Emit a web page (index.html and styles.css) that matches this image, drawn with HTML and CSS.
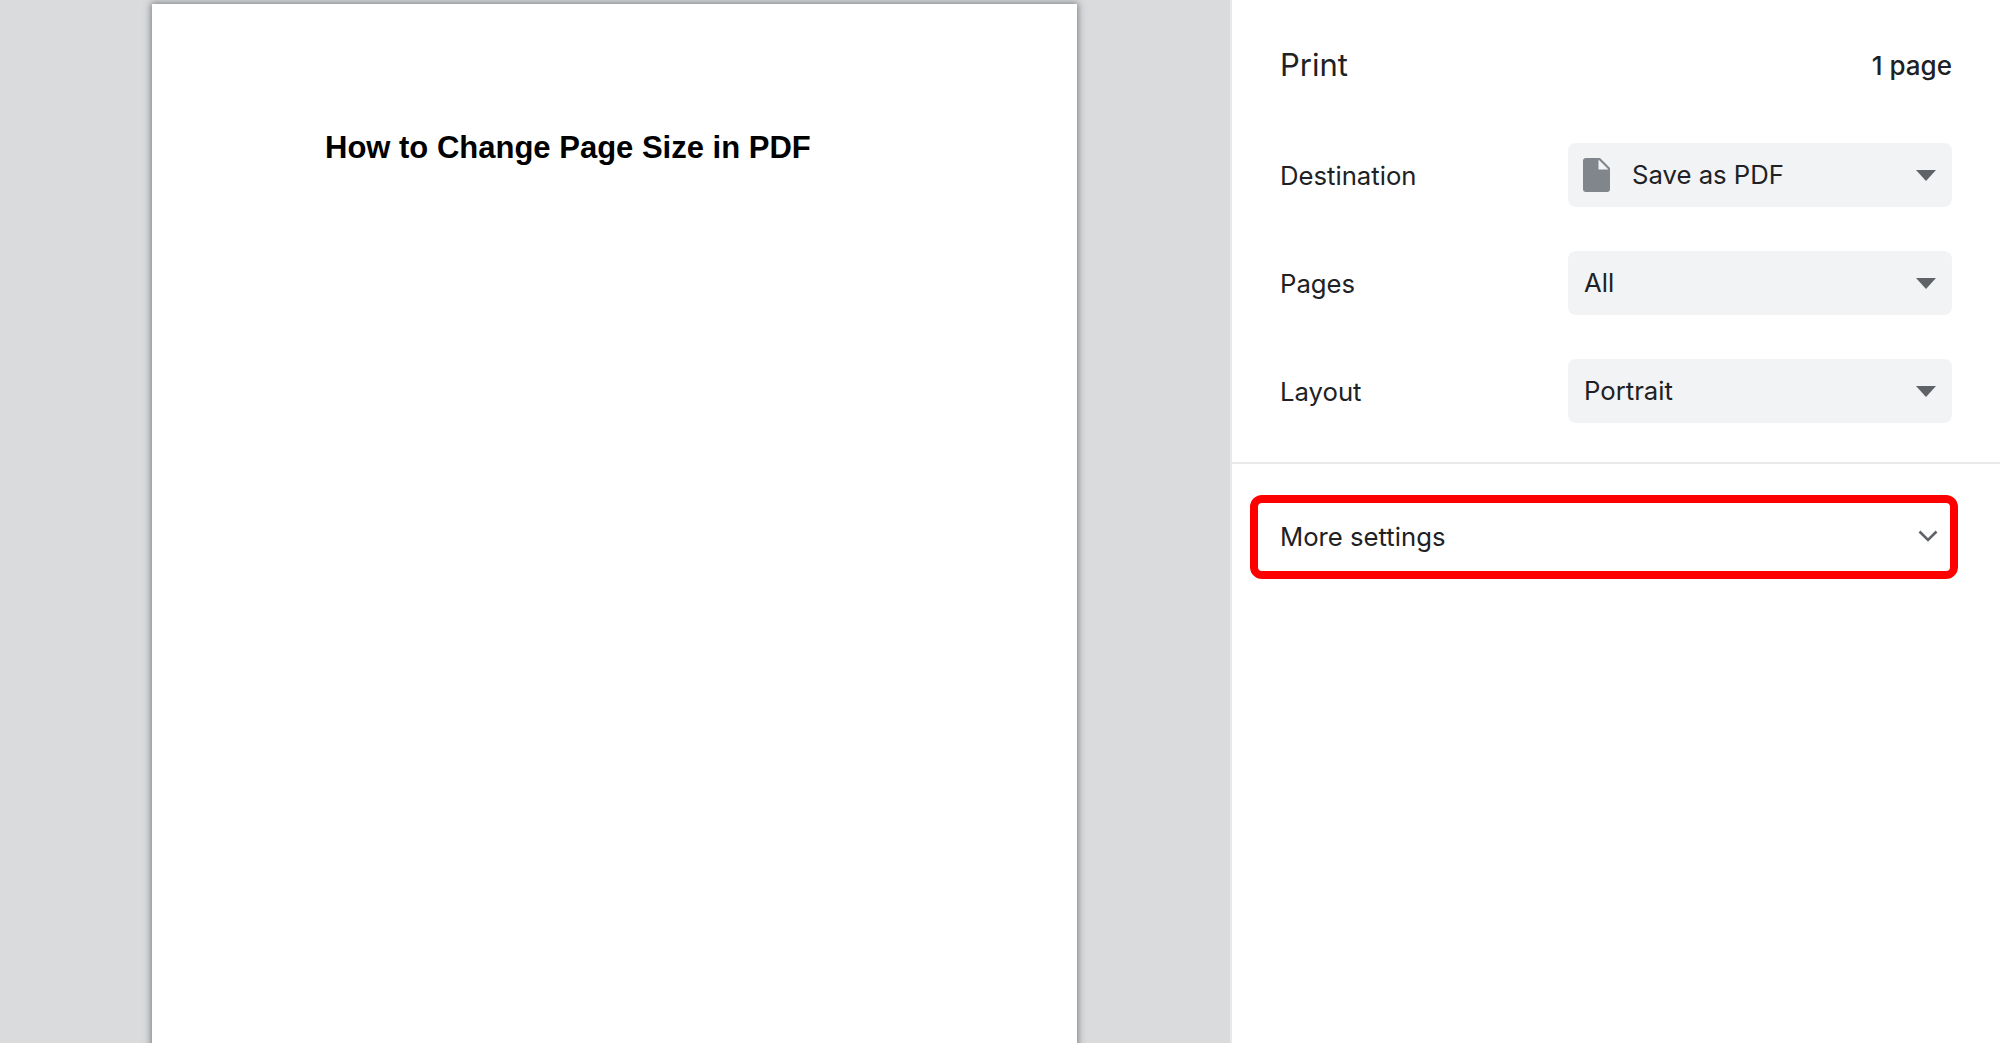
FILE: index.html
```html
<!DOCTYPE html>
<html lang="en">
<head>
<meta charset="utf-8">
<title>Print</title>
<link rel="stylesheet" href="styles.css">
</head>
<body>
<main class="preview">
  <article class="sheet">
    <h1 class="sheet-title">How to Change Page Size in PDF</h1>
  </article>
</main>
<aside class="sidebar">
  <header class="head">
    <h2 class="head-title">Print</h2>
    <span class="head-count">1 page</span>
  </header>
  <section class="settings">
    <div class="row">
      <span class="label">Destination</span>
      <div class="select">
        <svg class="doc-icon" viewBox="0 0 27 34" aria-hidden="true"><path d="M3 0H17L27 10V31a3 3 0 0 1-3 3H3a3 3 0 0 1-3-3V3a3 3 0 0 1 3-3Z" fill="#80868b"/><path d="M15.500 1.500V11.500H25.500Z" fill="#f1f3f4"/></svg>
        <span class="value">Save as PDF</span>
        <svg class="caret" viewBox="0 0 20 11" aria-hidden="true"><path d="M0 0H20L10 11Z"/></svg>
      </div>
    </div>
    <div class="row">
      <span class="label">Pages</span>
      <div class="select">
        <span class="value">All</span>
        <svg class="caret" viewBox="0 0 20 11" aria-hidden="true"><path d="M0 0H20L10 11Z"/></svg>
      </div>
    </div>
    <div class="row">
      <span class="label">Layout</span>
      <div class="select">
        <span class="value">Portrait</span>
        <svg class="caret" viewBox="0 0 20 11" aria-hidden="true"><path d="M0 0H20L10 11Z"/></svg>
      </div>
    </div>
  </section>
  <div class="more">
    <span class="more-label">More settings</span>
    <svg class="chevron" viewBox="0 0 20 12" aria-hidden="true"><path d="M1.500 1.500L10 10L18.500 1.500" fill="none" stroke="#5f6368" stroke-width="2.600"/></svg>
  </div>
</aside>
</body>
</html>
```
FILE: styles.css
```css
* { box-sizing: border-box; }
html, body { height: 100%; margin: 0; }
body {
  display: flex;
  overflow: hidden;
  font-family: Inter, "Liberation Sans", sans-serif;
  color: #202124;
  background: #fff;
}
.preview {
  width: 1230px;
  flex: none;
  height: 1043px;
  padding: 4px 0 0 152px;
  background: #dadbdd;
  overflow: hidden;
}
.sheet {
  width: 925px;
  height: 1200px;
  background: #fff;
  box-shadow: 0 0 7px 1px rgba(70, 72, 80, .65);
  padding: 124px 0 0 173px;
}
.sheet-title {
  margin: 0;
  font: 700 31px/40px "Liberation Sans", Arial, sans-serif;
  color: #000;
}
.sidebar {
  flex: 1;
  border-left: 2px solid #e9e9ea;
  display: flex;
  flex-direction: column;
}
.head {
  height: 143px;
  padding: 44px 48px 0 48px;
  display: flex;
  justify-content: space-between;
  align-items: flex-start;
}
.head-title {
  margin: 0;
  font-size: 31px;
  line-height: 42px;
  font-weight: 400;
}
.head-count {
  font-size: 26px;
  line-height: 44px;
  font-weight: 500;
}
.settings {
  display: flex;
  flex-direction: column;
  gap: 44px;
  padding: 0 48px 39px 48px;
  border-bottom: 2px solid #e9e9ea;
}
.row {
  display: flex;
  align-items: center;
  justify-content: space-between;
}
.label {
  font-size: 25.700px;
}
.select {
  width: 384px;
  height: 64px;
  border-radius: 8px;
  background: #f1f3f4;
  display: flex;
  align-items: center;
  padding: 0 16px 0 16px;
}
.value {
  font-size: 25.700px;
  flex: 1;
  padding-bottom: 2px;
}
.doc-icon {
  width: 27px;
  height: 34px;
  margin: 0 22px 0 -1px;
  flex: none;
}
.caret {
  width: 20px;
  height: 11px;
  fill: #5f6368;
  flex: none;
}
.more {
  margin: 31px 42px 0 18px;
  height: 84px;
  border: 8px solid #f00;
  border-radius: 12px;
  display: flex;
  align-items: center;
  justify-content: space-between;
  padding: 0 12px 2px 22px;
}
.more-label { font-size: 25.700px; }
.chevron { width: 20px; height: 12px; flex: none; }
```
